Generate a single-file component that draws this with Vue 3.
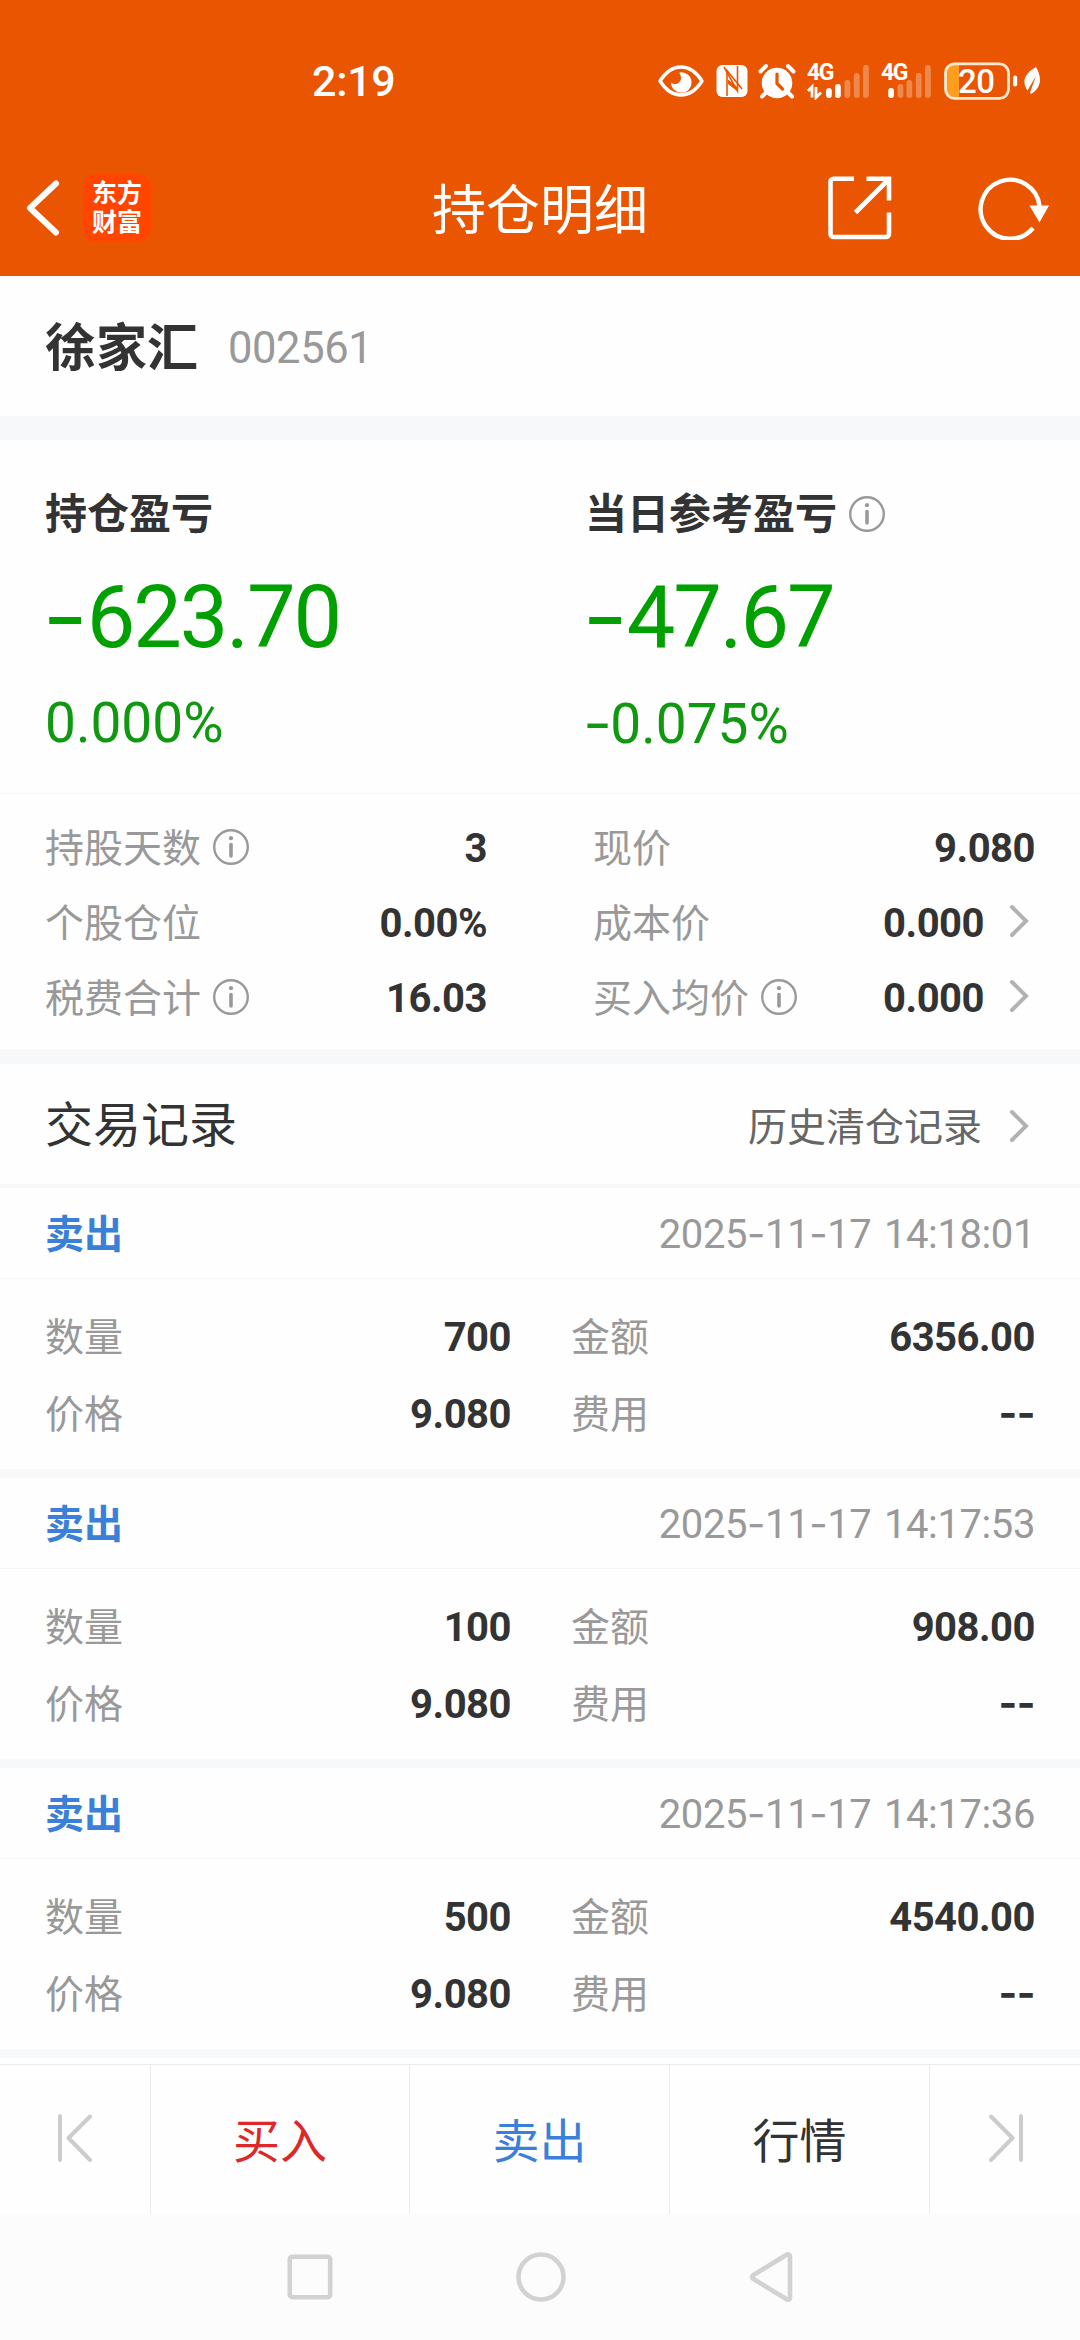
<script setup>
import { h } from 'vue'

const InfoIcon = () =>
  h('svg', { width: 36, height: 36, viewBox: '0 0 36 36', fill: 'none' }, [
    h('circle', { cx: 18, cy: 18, r: 16.8, stroke: '#999', 'stroke-width': 2.4 }),
    h('circle', { cx: 18, cy: 9.2, r: 2.1, fill: '#999' }),
    h('path', { d: 'M18 15.5V27', stroke: '#999', 'stroke-width': 3.6, 'stroke-linecap': 'round' }),
  ])

const Chevron = () =>
  h('svg', { width: 20, height: 34, viewBox: '0 0 20 34', fill: 'none' }, [
    h('path', { d: 'M3 3L17 17L3 31', stroke: '#b2b2b2', 'stroke-width': 4, 'stroke-linecap': 'round' }),
  ])

const profits = [
  { title: '持仓盈亏', sign: '-', amount: '623.70', pctSign: '', pct: '0.000%', info: false },
  { title: '当日参考盈亏', sign: '-', amount: '47.67', pctSign: '-', pct: '0.075%', info: true },
]

const leftStats = [
  { label: '持股天数', value: '3', info: true },
  { label: '个股仓位', value: '0.00%' },
  { label: '税费合计', value: '16.03', info: true },
]
const rightStats = [
  { label: '现价', value: '9.080' },
  { label: '成本价', value: '0.000', link: true },
  { label: '买入均价', value: '0.000', info: true, link: true },
]

const records = [
  { date: ['2025', '11', '17 14:18:01'], count: '700', amount: '6356.00', price: '9.080' },
  { date: ['2025', '11', '17 14:17:53'], count: '100', amount: '908.00', price: '9.080' },
  { date: ['2025', '11', '17 14:17:36'], count: '500', amount: '4540.00', price: '9.080' },
]
</script>

<template>
  <div class="screen">
    <header class="top">
      <div class="status">
        <span class="clock">2:19</span>
        <div class="status-icons">
          <svg width="46" height="36" viewBox="0 0 46 36" fill="none">
            <path d="M2 18C8 8.500 15 4 23 4s15 4.500 21 14c-6 9.500-13 14-21 14S8 27.500 2 18z" stroke="#fff" stroke-width="3.400" stroke-linejoin="round" />
            <path d="M22.500 9.200A10.300 10.300 0 1 1 13 19.500a6 6 0 0 0 10-4.500c0-2.300-.6-3.600-1.800-5z" fill="#fff" />
          </svg>
          <svg class="nfc" width="32" height="34" viewBox="0 0 32 34">
            <rect x="0.500" y="1" width="31" height="32" rx="6" fill="#fff" />
            <path d="M11 32V6.500L26 25" fill="none" stroke="#e95500" stroke-width="1.600" />
            <path d="M21.500 2v25L8 3" fill="none" stroke="#e95500" stroke-width="1.600" />
            <path d="M12 15.500l9 7.500v4L12 20z" fill="#e95500" />
          </svg>
          <svg class="alarm" width="38" height="36" viewBox="0 0 38 36" fill="none">
            <circle cx="19" cy="20" r="15.300" fill="#fff" />
            <path d="M2.500 8.500L8 3M35.500 8.500L30 3M7.500 30l-3.500 3.500M30.500 30l3.500 3.500" stroke="#fff" stroke-width="4" stroke-linecap="round" />
            <path d="M19 11v9.500l5.500 5.500" stroke="#e95500" stroke-width="3.200" stroke-linecap="round" />
          </svg>
          <div class="signal sig1">
            <span class="net">4G</span>
            <svg width="63" height="38" viewBox="0 0 63 38">
              <path d="M1 29l4-4v10.500M9 25v10.500l5-5" fill="none" stroke="#fff" stroke-width="2.800" />
              <g fill="#fff">
                <rect x="19" y="26" width="5.800" height="10" rx="2.900" />
                <rect x="28" y="22" width="5.800" height="14" rx="2.900" />
                <g opacity=".3">
                  <rect x="37.500" y="18" width="5.800" height="18" rx="2.900" />
                  <rect x="46.800" y="11" width="5.800" height="25" rx="2.900" />
                  <rect x="56" y="3" width="5.800" height="33" rx="2.900" />
                </g>
              </g>
            </svg>
          </div>
          <div class="signal sig2">
            <span class="net">4G</span>
            <svg width="51" height="38" viewBox="0 0 51 38">
              <g fill="#fff">
                <rect x="7.200" y="26" width="5.800" height="10" rx="2.900" />
                <g opacity=".3">
                  <rect x="16.500" y="22" width="5.800" height="14" rx="2.900" />
                  <rect x="25.500" y="18" width="5.800" height="18" rx="2.900" />
                  <rect x="34.800" y="11" width="5.800" height="25" rx="2.900" />
                  <rect x="44" y="3" width="5.800" height="33" rx="2.900" />
                </g>
              </g>
            </svg>
          </div>
          <svg class="battery" width="74" height="38" viewBox="0 0 74 38">
            <path d="M9 3H15V35H9a7 7 0 0 1-7-7V10a7 7 0 0 1 7-7z" fill="#ff9d1e" />
            <rect x="1.500" y="1.800" width="63" height="34.500" rx="9" fill="none" stroke="#ffe9d2" stroke-width="2.800" />
            <rect x="69" y="13.500" width="4.200" height="11" rx="2" fill="#fff" />
            <text x="32.300" y="30.500" class="level" text-anchor="middle">20</text>
          </svg>
          <svg class="leaf" width="18" height="30" viewBox="0 0 18 30">
            <path d="M13 1c5.500 9.500 6.500 20-5 27l-1-1.500L13 10 4.500 24.500C-2 15 2 7.500 13 1z" fill="#fff" />
          </svg>
        </div>
      </div>
      <div class="bar">
        <svg class="back" width="36" height="58" viewBox="0 0 36 58" fill="none">
          <path d="M31 4.500L5 29L31 53.500" stroke="#fff" stroke-width="6" stroke-linecap="round" stroke-linejoin="round" />
        </svg>
        <div class="logo"><span>东方</span><span>财富</span></div>
        <h1>持仓明细</h1>
        <svg class="share" width="64" height="64" viewBox="0 0 64 64" fill="none" stroke="#fff" stroke-width="4.600">
          <path d="M26 2.800H5.500a3 3 0 0 0-3 3V58a3 3 0 0 0 3 3H58a3 3 0 0 0 3-3V36.500" />
          <path d="M38.500 2.800H61V24.500M60.500 3.500L27.500 36.500" />
        </svg>
        <svg class="refresh" width="72" height="64" viewBox="0 0 72 64" fill="none">
          <path d="M55 52A29.500 29.500 0 1 1 61.500 30" stroke="#fff" stroke-width="4.400" />
          <path d="M51.400 29.500H71L61.500 46.500z" fill="#fff" />
        </svg>
      </div>
    </header>

    <section class="stock">
      <h2>徐家汇</h2>
      <span class="code">002561</span>
    </section>

    <section class="profits">
      <div v-for="p in profits" :key="p.title" class="profit">
        <div class="profit-title">{{ p.title }}<InfoIcon v-if="p.info" class="info" /></div>
        <div class="amount"><span class="dash">{{ p.sign }}</span>{{ p.amount }}</div>
        <div class="pct"><span v-if="p.pctSign" class="dash">{{ p.pctSign }}</span>{{ p.pct }}</div>
      </div>
    </section>

    <section class="stats">
      <div class="stat-col stat-left">
        <div v-for="s in leftStats" :key="s.label" class="stat">
          <span class="label">{{ s.label }}</span>
          <InfoIcon v-if="s.info" class="info" />
          <span class="value">{{ s.value }}</span>
        </div>
      </div>
      <div class="stat-col stat-right">
        <div v-for="s in rightStats" :key="s.label" class="stat">
          <span class="label">{{ s.label }}</span>
          <InfoIcon v-if="s.info" class="info" />
          <span class="value">{{ s.value }}</span>
          <Chevron v-if="s.link" class="chevron" />
        </div>
      </div>
    </section>

    <section class="records-head">
      <h3>交易记录</h3>
      <span class="history">历史清仓记录</span>
      <Chevron class="chevron" />
    </section>

    <main class="records">
      <article v-for="r in records" :key="r.date[2]" class="record">
        <div class="record-top">
          <span class="side">卖出</span>
          <span class="date">{{ r.date[0] }}<span class="dash">-</span>{{ r.date[1] }}<span class="dash">-</span>{{ r.date[2] }}</span>
        </div>
        <div class="record-body">
          <div class="pair">
            <span class="label">数量</span><span class="value">{{ r.count }}</span>
            <span class="label second">金额</span><span class="value">{{ r.amount }}</span>
          </div>
          <div class="pair">
            <span class="label">价格</span><span class="value">{{ r.price }}</span>
            <span class="label second">费用</span><span class="value fee">--</span>
          </div>
        </div>
      </article>
    </main>

    <footer class="actions">
      <button class="edge" aria-label="上一只">
        <svg width="34" height="48" viewBox="0 0 34 48" fill="none" stroke="#ccc" stroke-width="4" stroke-linecap="round" stroke-linejoin="round">
          <path d="M2 2V46M32 2.500L10.500 24L32 46" />
        </svg>
      </button>
      <button class="buy">买入</button>
      <button class="sell">卖出</button>
      <button class="quote">行情</button>
      <button class="edge last" aria-label="下一只">
        <svg width="34" height="48" viewBox="0 0 34 48" fill="none" stroke="#ccc" stroke-width="4" stroke-linecap="round" stroke-linejoin="round">
          <path d="M32 2V46M2 2.500L23.500 24L2 46" />
        </svg>
      </button>
    </footer>

    <nav class="system">
      <svg width="46" height="50" viewBox="0 0 46 50" fill="none" stroke="#d2d2d2" stroke-width="4.600">
        <rect x="2.800" y="4.800" width="40.400" height="40.400" rx="2.500" />
      </svg>
      <svg width="50" height="50" viewBox="0 0 50 50" fill="none" stroke="#d2d2d2" stroke-width="4.600">
        <circle cx="25" cy="25" r="22.500" />
      </svg>
      <svg width="44" height="52" viewBox="0 0 44 52" fill="none" stroke="#d2d2d2" stroke-width="4.600" stroke-linejoin="round">
        <path d="M41 5.200a2 2 0 0 0-3-1.700L4 24.300a2 2 0 0 0 0 3.400L38 48.500a2 2 0 0 0 3-1.700z" />
      </svg>
    </nav>
  </div>
</template>

<style>
body {
  background: #fff;
}
</style>

<style scoped>
.screen {
  width: 1080px;
  height: 2340px;
  display: flex;
  flex-direction: column;
  overflow: hidden;
  background: #fefefe;
  color: #333;
  font-family: Roboto, "Noto Sans CJK SC", sans-serif;
}
h1, h2, h3 {
  margin: 0;
}
svg {
  display: block;
  flex: none;
}

.top {
  height: 276px;
  background: #e95500;
  color: #fff;
}
.status {
  height: 140px;
  padding: 22px 39px 0 312px;
  box-sizing: border-box;
  display: flex;
  align-items: center;
  justify-content: space-between;
}
.clock {
  font-size: 43px;
  font-weight: 500;
  line-height: 50px;
  letter-spacing: -0.3px;
}
.status-icons {
  display: flex;
  align-items: center;
}
.nfc { margin-left: 12px; }
.alarm { margin-left: 10px; }
.sig1 { margin-left: 11px; }
.sig2 { margin-left: 11px; }
.battery { margin-left: 12px; }
.leaf { margin-left: 5px; }
.signal {
  display: grid;
}
.signal > * {
  grid-area: 1 / 1;
}
.net {
  margin-top: -3px;
  height: 28px;
  font-size: 23px;
  font-weight: 700;
  line-height: 28px;
  letter-spacing: -1.5px;
}
.level {
  font-size: 33px;
  font-weight: 500;
  fill: #fff;
  letter-spacing: -0.5px;
}
.bar {
  height: 136px;
  display: flex;
  align-items: center;
}
.back {
  margin-left: 25px;
}
.logo {
  width: 68px;
  height: 68px;
  margin-left: 22px;
  border-radius: 14px;
  background: #ff4500;
  display: flex;
  flex-direction: column;
  align-items: center;
  justify-content: center;
  box-sizing: border-box;
}
.logo span {
  font-size: 25px;
  font-weight: 700;
  line-height: 29px;
}
h1 {
  flex: 1;
  margin-left: 281px;
  font-size: 54px;
  font-weight: 400;
  line-height: 64px;
  padding-top: 8px;
}
.share {
  margin-right: 86px;
}
.refresh {
  margin-right: 30px;
}

.stock {
  height: 140px;
  box-sizing: border-box;
  padding: 5px 45px 0;
  display: flex;
  align-items: center;
}
h2 {
  font-size: 51px;
  font-weight: 700;
  line-height: 60px;
}
.code {
  margin-left: 30px;
  color: #999;
  font-size: 43.500px;
  line-height: 50px;
  letter-spacing: -0.4px;
}

.profits {
  height: 378px;
  box-sizing: border-box;
  border-top: 24px solid #f6f8fa;
  border-bottom: 1px solid #f5f5f5;
  padding: 50px 0 0 45px;
  display: grid;
  grid-template-columns: 540px 1fr;
}
.profit-title {
  display: flex;
  align-items: center;
  height: 50px;
  font-size: 42px;
  font-weight: 700;
  line-height: 50px;
}
.info {
  margin-left: 12px;
}
.profit-title .info {
  margin-top: -3px;
}
.dash {
  font-family: Inter, sans-serif;
}
.amount .dash,
.pct .dash {
  display: inline-block;
  transform: scaleX(1.15);
}
.amount .dash {
  margin-right: 4px;
}
.amount {
  margin-top: 26px;
  height: 100px;
  line-height: 99px;
  font-size: 86.500px;
  letter-spacing: -2.1px;
  color: #00a000;
}
.pct {
  margin-top: 27px;
  height: 60px;
  line-height: 60px;
  font-size: 55px;
  color: #109810;
}

.stats {
  height: 255px;
  box-sizing: border-box;
  padding: 17px 45px 0;
  display: flex;
}
.stat-left {
  width: 442px;
  margin-right: 106px;
}
.stat-right {
  flex: 1;
}
.stat {
  height: 75px;
  display: flex;
  align-items: center;
}
.stat .info {
  margin-top: -4px;
}
.label {
  font-size: 39px;
  line-height: 46px;
  color: #999;
}
.value {
  margin-left: auto;
  font-size: 40px;
  font-weight: 700;
  line-height: 46px;
  letter-spacing: -0.5px;
}
.chevron {
  margin: -6px 6px 0 25px;
}

.records-head {
  height: 139px;
  box-sizing: border-box;
  border-top: 15px solid #f6f8fa;
  border-bottom: 4px solid #f7f7f7;
  padding: 4px 45px 0;
  display: flex;
  align-items: center;
}
h3 {
  flex: 1;
  font-size: 48px;
  font-weight: 400;
  line-height: 56px;
}
.history {
  padding-top: 4px;
  font-size: 39px;
  line-height: 46px;
  color: #666;
}
.records-head .chevron {
  margin-top: 0;
  margin-left: 27px;
}

.records {
  height: 876px;
}
.record {
  height: 290px;
  box-sizing: border-box;
  border-bottom: 9px solid #f6f8fa;
}
.record-top {
  height: 91px;
  box-sizing: border-box;
  padding: 2px 45px 0;
  border-bottom: 1px solid #f5f5f5;
  display: flex;
  align-items: center;
  justify-content: space-between;
  line-height: 46px;
}
.side {
  padding-top: 2px;
  font-size: 39px;
  font-weight: 700;
  color: #3a80d9;
}
.date {
  font-size: 40px;
  letter-spacing: -0.4px;
  word-spacing: 3px;
  color: #999;
}
.record-body {
  padding: 20px 45px 0;
}
.pair {
  height: 77px;
  display: grid;
  grid-template-columns: 160px 306px 160px 364px;
  align-items: center;
}
.pair .value {
  text-align: right;
  margin: 0;
}
.pair .second {
  padding-left: 60px;
}
.pair .fee {
  padding-bottom: 4px;
  font-family: Inter, sans-serif;
}

.actions {
  height: 150px;
  box-sizing: border-box;
  border-top: 1px solid #ebebeb;
  display: grid;
  grid-template-columns: 151px 259px 260px 260px 150px;
}
.actions button {
  border: 0;
  border-right: 1px solid #ebebeb;
  margin: 0;
  padding: 0 0 4px;
  background: none;
  display: flex;
  align-items: center;
  justify-content: center;
  font-family: inherit;
  font-size: 47px;
  color: #333;
}
.actions .last {
  border-right: 0;
  padding-left: 2px;
}
.actions .buy {
  color: #dc2828;
}
.actions .sell {
  color: #3a80d9;
}

.system {
  height: 126px;
  background: #fcfcfc;
  display: flex;
  align-items: center;
  justify-content: center;
  gap: 183px;
}
</style>
